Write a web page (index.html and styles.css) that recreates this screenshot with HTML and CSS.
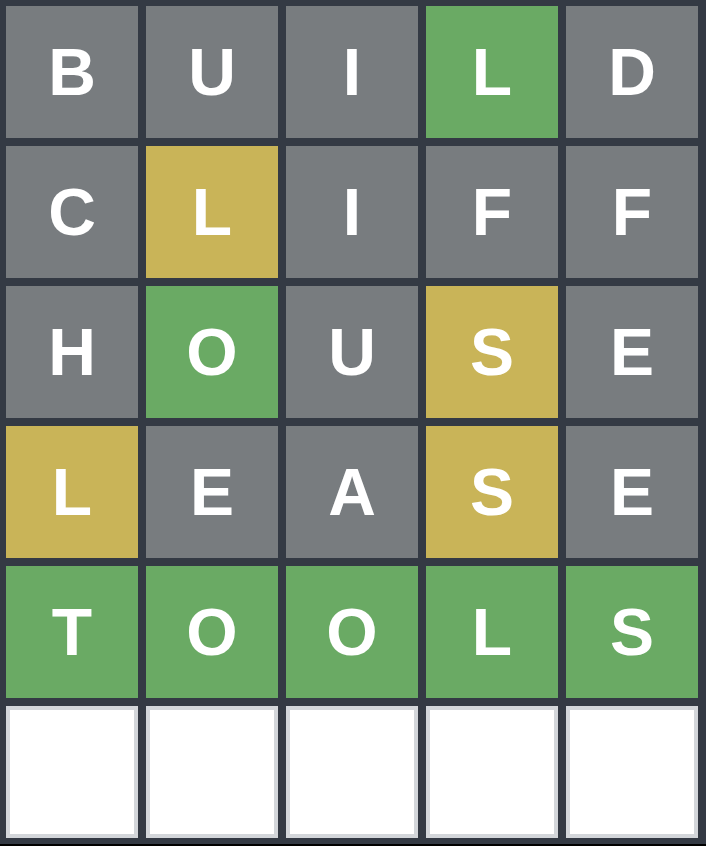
FILE: index.html
```html
<!DOCTYPE html>
<html>
<head>
<meta charset="utf-8">
<link rel="stylesheet" href="styles.css">
</head>
<body>
<div class="board">
  <div class="tile gray">B</div><div class="tile gray">U</div><div class="tile gray">I</div><div class="tile green">L</div><div class="tile gray">D</div>
  <div class="tile gray">C</div><div class="tile yellow">L</div><div class="tile gray">I</div><div class="tile gray">F</div><div class="tile gray">F</div>
  <div class="tile gray">H</div><div class="tile green">O</div><div class="tile gray">U</div><div class="tile yellow">S</div><div class="tile gray">E</div>
  <div class="tile yellow">L</div><div class="tile gray">E</div><div class="tile gray">A</div><div class="tile yellow">S</div><div class="tile gray">E</div>
  <div class="tile green">T</div><div class="tile green">O</div><div class="tile green">O</div><div class="tile green">L</div><div class="tile green">S</div>
  <div class="tile empty"></div><div class="tile empty"></div><div class="tile empty"></div><div class="tile empty"></div><div class="tile empty"></div>
</div>
</body>
</html>
```
FILE: styles.css
```css
html, body {
  margin: 0;
  padding: 0;
  background: #000;
}
.board {
  width: 706px;
  height: 844px;
  box-sizing: border-box;
  padding: 6px;
  background: #343a44;
  display: grid;
  grid-template-columns: repeat(5, 132px);
  grid-template-rows: repeat(6, 132px);
  gap: 8px;
}
.tile {
  display: flex;
  align-items: center;
  justify-content: center;
  color: #fff;
  font-family: "Liberation Sans", Arial, sans-serif;
  font-weight: bold;
  font-size: 66px;
  line-height: 1;
  box-sizing: border-box;
}
.gray { background: #787c7f; }
.green { background: #6aaa64; }
.yellow { background: #c9b458; }
.empty {
  background: #fff;
  border: 4px solid #d3d6da;
}
```
